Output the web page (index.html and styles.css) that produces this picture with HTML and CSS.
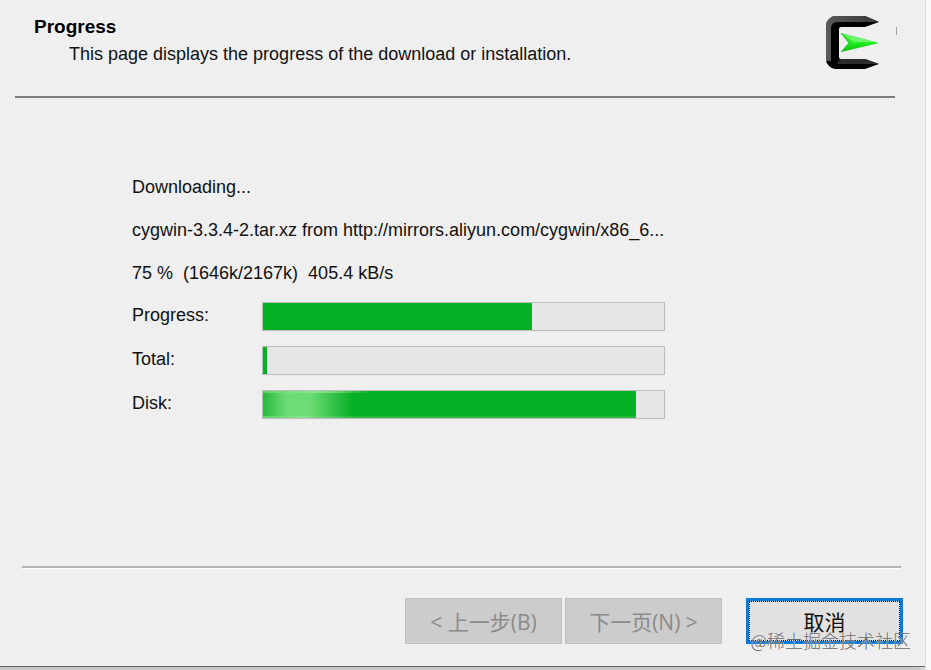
FILE: index.html
```html
<!DOCTYPE html>
<html lang="zh-CN">
<head>
    <meta charset="UTF-8">
    <meta name="viewport" content="width=device-width, initial-scale=1.0">
    <title>Cygwin Setup</title>
    <link rel="stylesheet" href="styles.css">
</head>
<body>
<div class="window">
    <header class="header">
        <div class="header-text">
            <h1>Progress</h1>
            <p>This page displays the progress of the download or installation.</p>
        </div>
        <svg class="logo" width="54" height="54" viewBox="0 0 54 54" aria-hidden="true">
            <defs>
                <linearGradient id="arrow" x1="0" y1="0" x2="0" y2="1">
                    <stop offset="0" stop-color="#2fe62f"/>
                    <stop offset="0.5" stop-color="#22f022"/>
                    <stop offset="1" stop-color="#08b808"/>
                </linearGradient>
                <linearGradient id="side" x1="0" y1="0" x2="1" y2="0">
                    <stop offset="0" stop-color="#5a5a5a"/>
                    <stop offset="1" stop-color="#383838"/>
                </linearGradient>
            </defs>
            <path d="M9 0H39L53 6L39 11H15Q13 11 13 13V41Q13 43 15 43H39L53 48L39 53H9Q6 53 3 50Q0 47 0 44V9Q0 6 3 3Q6 0 9 0Z" fill="#000"/>
            <path d="M9 0H39L53 6H12Q5 6 5 12V45H0V9Q0 6 3 3Q6 0 9 0Z" fill="url(#side)"/>
            <path d="M14 43H39L53 48H11Z" fill="#2c2c2c"/>
            <path d="M15 17L53 27L15 36L23 27Z" fill="url(#arrow)"/>
            <path d="M17 18L50 26L28 26Z" fill="#6cf56c"/>
            <path d="M15 17L23 27L15 36" fill="none" stroke="#30c030"/>
        </svg>
        <span class="tick"></span>
    </header>

    <main class="content">
        <p>Downloading...</p>
        <p>cygwin-3.3.4-2.tar.xz from http://mirrors.aliyun.com/cygwin/x86_6...</p>
        <p>75 % &nbsp;(1646k/2167k) &nbsp;405.4 kB/s</p>
        <div class="row">
            <label for="progress">Progress:</label>
            <progress id="progress" value="67" max="100"></progress>
        </div>
        <div class="row">
            <label for="total">Total:</label>
            <progress id="total" value="1" max="100"></progress>
        </div>
        <div class="row">
            <label for="disk">Disk:</label>
            <progress id="disk" class="shine" value="93" max="100"></progress>
        </div>
    </main>

    <footer class="footer">
        <div class="buttons">
            <button type="button" disabled>&lt; 上一步(B)</button>
            <button type="button" disabled>下一页(N) &gt;</button>
            <button type="button" class="cancel">取消</button>
        </div>
        <span class="watermark">@稀土掘金技术社区</span>
    </footer>
</div>
</body>
</html>
```

FILE: styles.css
```css
* {
    box-sizing: border-box;
}
body {
    margin: 0;
    padding: 0 6px 3px 0;
    min-height: 100vh;
    display: flex;
    background: linear-gradient(to left, #fafafa 5px, #e2e2e2 5px, #c8c8c8 12px);
    font-family: "Liberation Sans", Arial, "Noto Sans CJK SC", sans-serif;
    font-size: 18px;
    color: #111;
}
h1, p {
    margin: 0;
}
.window {
    flex: 1;
    display: flex;
    flex-direction: column;
    background: #efefef;
    border-bottom: 1px solid #686868;
}
.header {
    position: relative;
    display: flex;
    justify-content: space-between;
    height: 98px;
    margin: 0 30px 0 15px;
    padding: 16px 15px 0 19px;
    border-bottom: 2px solid #7c7c7c;
}
.header h1 {
    font-size: 19px;
    line-height: 22px;
    color: #000;
}
.header p {
    padding-left: 35px;
    line-height: 32px;
}
.tick {
    position: absolute;
    top: 27px;
    right: -2px;
    width: 1px;
    height: 8px;
    background: #a0a0a0;
}

.content {
    flex: 1;
    display: flex;
    flex-direction: column;
    gap: 15px;
    padding: 75px 24px 0 132px;
    line-height: 28px;
}
.row {
    display: flex;
    gap: 14px;
}
.row label {
    width: 116px;
    line-height: 26px;
}
progress {
    appearance: none;
    width: 403px;
    height: 29px;
    border: 1px solid #bcbcbc;
    background: #e6e6e6;
}
progress::-webkit-progress-bar {
    background: #e6e6e6;
}
progress::-webkit-progress-value {
    background: #06b025;
}
.shine::-webkit-progress-value {
    background:
        linear-gradient(to right, #5cd566 0, #8be68f 50px, #06b02500 110px) top / 100% 2px no-repeat,
        linear-gradient(to right, #5cd566 0, #8be68f 40px, #28b83c 90px) bottom / 100% 2px no-repeat,
        linear-gradient(to right, #28b83c 0, #6edc76 24px, #6edc76 46px, #06b025 90px);
}

.footer {
    position: relative;
    height: 100px;
    margin: 0 24px 0 22px;
    border-top: 2px solid #b4b4b4;
    box-shadow: inset 0 1px #fff;
}
.buttons {
    display: flex;
    justify-content: flex-end;
    gap: 3px;
    margin-right: -2px;
    padding-top: 30px;
}
button {
    width: 157px;
    height: 46px;
    padding: 0;
    border: 1px solid #bfbfbf;
    background: #ccc;
    color: #8a8a8a;
    font-family: "Open Sans", "Noto Sans CJK SC", sans-serif;
    font-size: 21px;
}
.cancel {
    margin-left: 21px;
    border: 3px solid #0a78d4;
    background: #e1e1e1;
    color: #111;
    outline: 1px dotted #111;
    outline-offset: -4px;
}
.watermark {
    position: absolute;
    right: -10px;
    bottom: 14px;
    font-family: "Noto Sans CJK SC", sans-serif;
    font-size: 18px;
    font-weight: 300;
    line-height: 24px;
    color: #666;
    text-shadow: 0 0 1px #fff;
}
```
